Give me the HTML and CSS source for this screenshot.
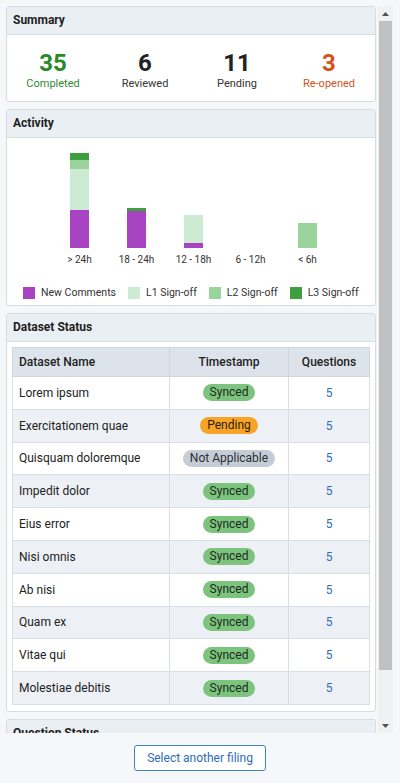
FILE: index.html
```html
<!DOCTYPE html>
<html lang="en">
<head>
<meta charset="utf-8">
<title>Filing overview</title>
<link rel="stylesheet" href="styles.css">
</head>
<body>
<div class="viewport">
  <div class="scroll">
    <section class="card">
      <header class="card-head">Summary</header>
      <div class="stats">
        <div class="stat stat-green"><span class="num">35</span><span class="lbl">Completed</span></div>
        <div class="stat"><span class="num">6</span><span class="lbl">Reviewed</span></div>
        <div class="stat"><span class="num">11</span><span class="lbl">Pending</span></div>
        <div class="stat stat-orange"><span class="num">3</span><span class="lbl">Re-opened</span></div>
      </div>
    </section>

    <section class="card">
      <header class="card-head">Activity</header>
      <div class="activity">
        <div class="chart">
          <div class="col">
            <div class="bar">
              <div class="seg l3" style="height:7px"></div>
              <div class="seg l2" style="height:9px"></div>
              <div class="seg l1" style="height:41px"></div>
              <div class="seg nc" style="height:38px"></div>
            </div>
          </div>
          <div class="col">
            <div class="bar">
              <div class="seg l3" style="height:3px"></div>
              <div class="seg nc" style="height:37px"></div>
            </div>
          </div>
          <div class="col">
            <div class="bar">
              <div class="seg l1" style="height:28px"></div>
              <div class="seg nc" style="height:5px"></div>
            </div>
          </div>
          <div class="col">
            <div class="bar"></div>
          </div>
          <div class="col">
            <div class="bar">
              <div class="seg l2" style="height:25px"></div>
            </div>
          </div>
        </div>
        <div class="axis">
          <span class="tick">&gt; 24h</span>
          <span class="tick">18 - 24h</span>
          <span class="tick">12 - 18h</span>
          <span class="tick">6 - 12h</span>
          <span class="tick">&lt; 6h</span>
        </div>
        <div class="legend">
          <span class="key"><i class="sw nc"></i>New Comments</span>
          <span class="key"><i class="sw l1"></i>L1 Sign-off</span>
          <span class="key"><i class="sw l2"></i>L2 Sign-off</span>
          <span class="key"><i class="sw l3"></i>L3 Sign-off</span>
        </div>
      </div>
    </section>

    <section class="card">
      <header class="card-head">Dataset Status</header>
      <div class="card-body">
        <table class="grid">
          <colgroup><col class="c-name"><col class="c-time"><col class="c-q"></colgroup>
          <thead>
            <tr><th class="left">Dataset Name</th><th>Timestamp</th><th>Questions</th></tr>
          </thead>
          <tbody>
            <tr><td class="left">Lorem ipsum</td><td><span class="pill ok">Synced</span></td><td class="q">5</td></tr>
            <tr><td class="left">Exercitationem quae</td><td><span class="pill pend">Pending</span></td><td class="q">5</td></tr>
            <tr><td class="left">Quisquam doloremque</td><td><span class="pill na">Not Applicable</span></td><td class="q">5</td></tr>
            <tr><td class="left">Impedit dolor</td><td><span class="pill ok">Synced</span></td><td class="q">5</td></tr>
            <tr><td class="left">Eius error</td><td><span class="pill ok">Synced</span></td><td class="q">5</td></tr>
            <tr><td class="left">Nisi omnis</td><td><span class="pill ok">Synced</span></td><td class="q">5</td></tr>
            <tr><td class="left">Ab nisi</td><td><span class="pill ok">Synced</span></td><td class="q">5</td></tr>
            <tr><td class="left">Quam ex</td><td><span class="pill ok">Synced</span></td><td class="q">5</td></tr>
            <tr><td class="left">Vitae qui</td><td><span class="pill ok">Synced</span></td><td class="q">5</td></tr>
            <tr><td class="left">Molestiae debitis</td><td><span class="pill ok">Synced</span></td><td class="q">5</td></tr>
          </tbody>
        </table>
      </div>
    </section>

    <section class="card">
      <header class="card-head">Question Status</header>
      <div class="card-body spacer"></div>
    </section>
  </div>
  <div class="scrollbar" aria-hidden="true">
    <div class="sb-btn"><svg width="7" height="4" viewBox="0 0 7 4"><polygon points="0,4 7,4 3.5,0" fill="#505050"/></svg></div>
    <div class="sb-track"><div class="sb-thumb"></div></div>
    <div class="sb-btn"><svg width="7" height="4" viewBox="0 0 7 4"><polygon points="0,0 7,0 3.5,4" fill="#505050"/></svg></div>
  </div>
</div>
<footer class="footer">
  <button class="btn" type="button">Select another filing</button>
</footer>
</body>
</html>
```

FILE: styles.css
```css
* { box-sizing: border-box; }

html, body {
  margin: 0;
  padding: 0;
}

body {
  width: 400px;
  height: 783px;
  overflow: hidden;
  background: #f5f7f9;
  font-family: Roboto, "Liberation Sans", sans-serif;
  color: #222;
  display: flex;
  flex-direction: column;
}

.viewport {
  display: flex;
  margin: 6px 7px 0 6px;
  height: 727px;
}

.scroll {
  flex: 1;
  overflow: hidden;
  display: flex;
  flex-direction: column;
  gap: 7px;
  padding-right: 1px;
}

.card {
  flex-shrink: 0;
  background: #fff;
  border: 1px solid #d6dce3;
  border-radius: 3px;
}

.card-head {
  height: 28px;
  line-height: 27px;
  padding: 0 6px;
  background: #eaeff4;
  border-bottom: 1px solid #d6dce3;
  font-size: 12px;
  font-weight: 700;
  color: #222;
}

/* Summary */
.stats {
  display: flex;
  padding: 14px 0 10px;
}

.stat {
  flex: 1;
  display: flex;
  flex-direction: column;
  align-items: center;
}

.num {
  font-size: 24px;
  font-weight: 700;
  line-height: 28px;
  color: #222;
}

.lbl {
  font-size: 11px;
  line-height: 14px;
  color: #333;
}

.stat-green .num { color: #2a8a2a; }
.stat-green .lbl { color: #2f8a34; }
.stat-orange .num { color: #d4531a; }
.stat-orange .lbl { color: #d4531a; }

/* Activity */
.activity {
  padding: 8px 0 5px;
}

.chart,
.axis {
  display: flex;
  padding-left: 44px;
}

.chart {
  height: 102px;
  align-items: flex-end;
}

.col {
  width: 57px;
  display: flex;
  justify-content: center;
}

.bar {
  width: 19px;
  display: flex;
  flex-direction: column;
}

.nc { background: #a843c2; }
.l1 { background: #cdebd3; }
.l2 { background: #9ad39b; }
.l3 { background: #3e9f40; }

.axis {
  margin-top: 5px;
}

.tick {
  width: 57px;
  text-align: center;
  font-size: 10px;
  line-height: 14px;
  color: #333;
}

.legend {
  display: flex;
  align-items: center;
  gap: 12px;
  margin-top: 19px;
  padding-left: 16px;
  font-size: 10.5px;
  line-height: 14px;
  color: #333;
}

.key {
  display: flex;
  align-items: center;
  gap: 6px;
}

.sw {
  width: 12px;
  height: 12px;
  display: block;
}

/* Dataset table */
.card-body {
  padding: 5px 5px 6px 5px;
}

.grid {
  width: 100%;
  border-collapse: collapse;
  table-layout: fixed;
  font-size: 12px;
  border: 1px solid #d3d9e0;
}

.c-name { width: 157px; }
.c-time { width: 119px; }
.c-q { width: 81px; }

.grid th {
  height: 29px;
  background: #dde3ea;
  font-weight: 500;
  color: #222;
  text-align: center;
  border: 1px solid #cfd6de;
  padding: 0 6px;
}

.grid td {
  height: 32.8px;
  border: 1px solid #d8dee5;
  text-align: center;
  padding: 0 6px;
  color: #222;
}

.grid .left {
  text-align: left;
}

.grid tbody tr:nth-child(even) td {
  background: #edf1f6;
}

.grid tbody tr:nth-child(odd) td {
  background: #fff;
}

.q {
  color: #2f6db5 !important;
}

.pill {
  display: inline-block;
  height: 17px;
  line-height: 17px;
  padding: 0 7px;
  border-radius: 9px;
  font-size: 12px;
  color: #1d2b1d;
}

.ok { background: #7cc47e; }
.pend { background: #f9a326; color: #2a2010; }
.na { background: #c5ccd5; color: #2a2f36; }

.spacer {
  height: 60px;
}

/* Fake scrollbar */
.scrollbar {
  width: 15px;
  flex-shrink: 0;
  margin-left: 1px;
  background: #f1f1f1;
  display: flex;
  flex-direction: column;
}

.sb-btn {
  height: 15px;
  display: flex;
  align-items: center;
  justify-content: center;
  flex-shrink: 0;
}

.sb-track {
  flex: 1;
  padding: 0 1px;
}

.sb-thumb {
  height: 649px;
  background: #c1c1c1;
}

/* Footer */
.footer {
  flex: 1;
  display: flex;
  align-items: center;
  justify-content: center;
}

.btn {
  height: 26px;
  padding: 0 12px;
  background: #fff;
  border: 1px solid #3d84c6;
  border-radius: 3px;
  font-family: Roboto, "Liberation Sans", sans-serif;
  font-size: 12px;
  color: #2f6db5;
}
```
